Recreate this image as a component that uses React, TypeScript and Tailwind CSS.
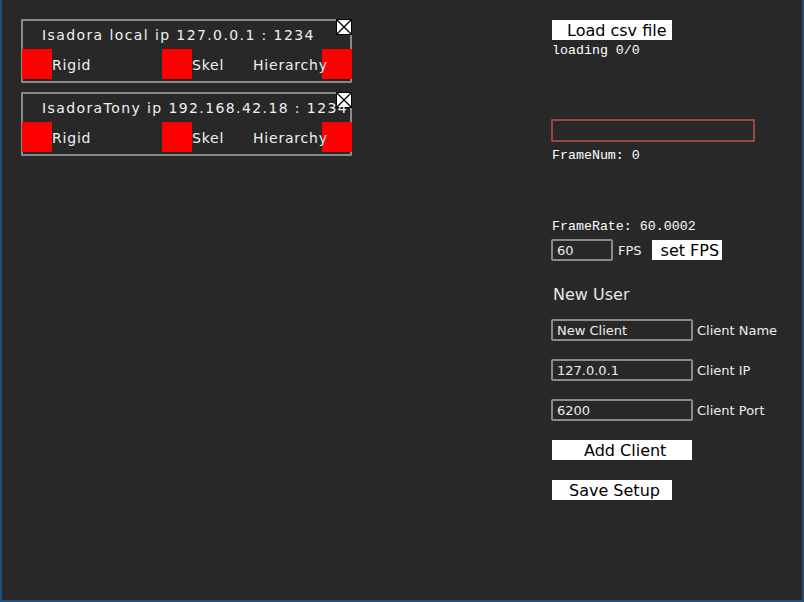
import React from 'react'

const sans = { fontFamily: '"DejaVu Sans", Verdana, sans-serif' }
const mono = { fontFamily: '"Liberation Mono", "DejaVu Sans Mono", monospace' }

type Client = { name: string; ip: string; port: number }

const clients: Client[] = [
    { name: 'Isadora local', ip: '127.0.0.1', port: 1234 },
    { name: 'IsadoraTony', ip: '192.168.42.18', port: 1234 },
]

function CloseBox() {
    return (
        <div className="absolute -top-[2px] -right-[2px] w-4 h-4 bg-white border border-black">
            <svg viewBox="0 0 14 14" className="w-full h-full block">
                <path d="M0 0 L14 14 M14 0 L0 14" stroke="black" strokeWidth="1.3" />
            </svg>
        </div>
    )
}

function ClientPanel({ client }: { client: Client }) {
    return (
        <div className="relative w-[331px] h-[64px] border-2 border-[#8a8a8a] rounded-[1px]">
            <CloseBox />
            <div className="relative z-10 pt-[6px] pl-[19px] h-[22px] text-[14px] leading-[16px] tracking-[1.4px] text-[#f0f0f0] whitespace-nowrap">
                {client.name} ip {client.ip} : {client.port}
            </div>
            {/* toggles */}
            <div className="flex items-center h-[30px] mt-[6px] -ml-px -mr-[2px] text-[14px] leading-[16px] tracking-[0.8px] text-[#f0f0f0] whitespace-nowrap">
                <div className="w-[30px] h-[30px] bg-[#ff0000] shrink-0" />
                <span className="w-[110px] shrink-0 pt-[2px]">Rigid</span>
                <div className="w-[30px] h-[30px] bg-[#ff0000] shrink-0" />
                <span className="w-[61px] shrink-0 pt-[2px]">Skel</span>
                <span className="w-[69px] shrink-0 pt-[2px] relative z-10">Hierarchy</span>
                <div className="w-[30px] h-[30px] bg-[#ff0000] shrink-0" />
            </div>
        </div>
    )
}

function Field({ value, label }: { value: string; label: string }) {
    return (
        <div className="flex items-center h-[22px]">
            <div className="w-[142px] h-[22px] border-2 border-[#8a8a8a] rounded-[2px] pl-[4px] text-[13px] leading-[20px] text-[#ececec]">
                {value}
            </div>
            <span className="ml-[4px] pt-[2px] text-[13px] text-[#ececec]">{label}</span>
        </div>
    )
}

function App() {
    return (
        <div
            className="flex w-[804px] h-[602px] bg-[#282828] border-l-2 border-r-2 border-b-2 border-[#22507a] overflow-hidden"
            style={sans}
        >
            {/* Clients */}
            <div className="flex flex-col gap-[9px] pt-[19px] pl-[19px] w-[350px] shrink-0">
                {clients.map((c) => (
                    <ClientPanel key={c.name} client={c} />
                ))}
            </div>

            {/* Controls */}
            <div className="flex flex-col ml-[199px] pt-[20px] text-white">
                <div className="ml-px w-[120px] h-[20px] bg-white text-black text-[16px] leading-[22px] pl-[15px] whitespace-nowrap overflow-hidden">
                    Load csv file
                </div>
                <div className="ml-px mt-[4px] text-[13.3px] leading-[14px]" style={mono}>
                    loading 0/0
                </div>

                <div className="mt-[61px] w-[204px] h-[23px] border-2 border-[#9b4646] rounded-[1px]" />
                <div className="ml-px mt-[7px] text-[13.3px] leading-[14px]" style={mono}>
                    FrameNum: 0
                </div>

                <div className="ml-px mt-[57px] text-[13.3px] leading-[14px]" style={mono}>
                    FrameRate: 60.0002
                </div>
                <div className="flex items-center mt-[5px] h-[22px]">
                    <div className="w-[62px] h-[22px] border-2 border-[#8a8a8a] rounded-[2px] pl-[4px] text-[13px] leading-[20px] text-[#ececec]">
                        60
                    </div>
                    <span className="ml-[5px] pt-[2px] text-[13px] text-[#ececec]">FPS</span>
                    <div className="ml-[10px] w-[70px] h-[20px] bg-white text-black text-[16px] leading-[22px] pl-[9px] whitespace-nowrap overflow-hidden">
                        set FPS
                    </div>
                </div>

                <div className="ml-[2px] mt-[24px] text-[16px] leading-[20px] text-[#e6e6e6]">New User</div>

                <div className="flex flex-col gap-[18px] mt-[14px]">
                    <Field value="New Client" label="Client Name" />
                    <Field value="127.0.0.1" label="Client IP" />
                    <Field value="6200" label="Client Port" />
                </div>

                <div className="ml-px mt-[19px] w-[140px] h-[20px] bg-white text-black text-[16px] leading-[22px] pl-[32px] whitespace-nowrap overflow-hidden">
                    Add Client
                </div>
                <div className="ml-px mt-[20px] w-[120px] h-[20px] bg-white text-black text-[16px] leading-[22px] pl-[17px] whitespace-nowrap overflow-hidden">
                    Save Setup
                </div>
            </div>
        </div>
    )
}

export default App
